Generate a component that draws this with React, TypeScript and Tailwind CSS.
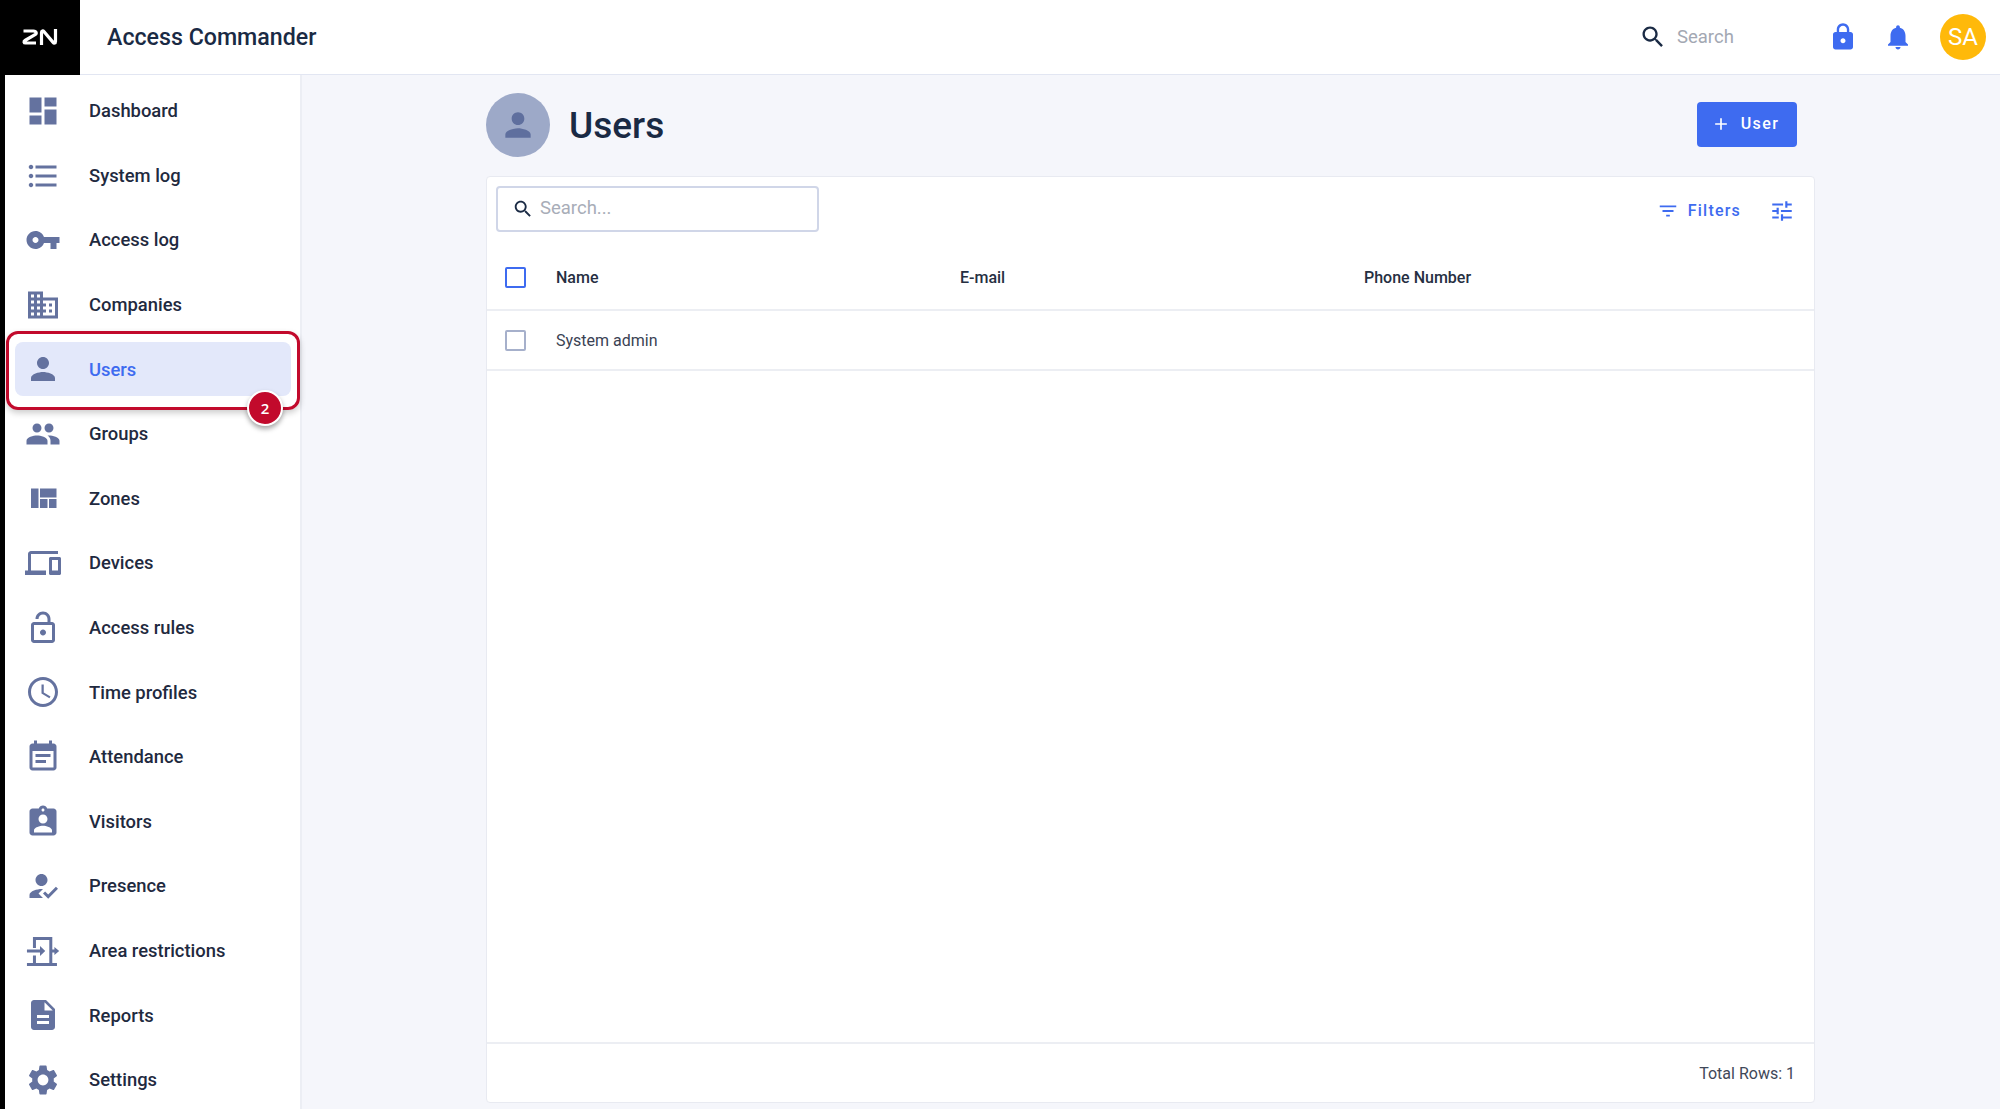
const paths = {
  dashboard: "M3 13h8V3H3v10zm0 8h8v-6H3v6zm10 0h8V11h-8v10zm0-18v6h8V3h-8z",
  list: "M4 10.5c-.83 0-1.5.67-1.5 1.5s.67 1.5 1.5 1.5 1.5-.67 1.5-1.5-.67-1.5-1.5-1.5zm0-6c-.83 0-1.5.67-1.5 1.5S3.17 7.5 4 7.5 5.5 6.83 5.5 6 4.83 4.5 4 4.5zm0 12c-.83 0-1.5.68-1.5 1.5s.68 1.5 1.5 1.5 1.5-.68 1.5-1.5-.67-1.5-1.5-1.5zM7 19h14v-2H7v2zm0-6h14v-2H7v2zm0-8v2h14V5H7z",
  key: "M12.65 10C11.83 7.67 9.61 6 7 6c-3.31 0-6 2.69-6 6s2.69 6 6 6c2.61 0 4.83-1.67 5.65-4H17v4h4v-4h2v-4H12.65zM7 14c-1.1 0-2-.9-2-2s.9-2 2-2 2 .9 2 2-.9 2-2 2z",
  domain: "M12 7V3H2v18h20V7H12zM6 19H4v-2h2v2zm0-4H4v-2h2v2zm0-4H4V9h2v2zm0-4H4V5h2v2zm4 12H8v-2h2v2zm0-4H8v-2h2v2zm0-4H8V9h2v2zm0-4H8V5h2v2zm10 12h-8v-2h2v-2h-2v-2h2v-2h-2V9h8v10zm-2-8h-2v2h2v-2zm0 4h-2v2h2v-2z",
  person: "M12 12c2.21 0 4-1.79 4-4s-1.79-4-4-4-4 1.79-4 4 1.79 4 4 4zm0 2c-2.67 0-8 1.34-8 4v2h16v-2c0-2.66-5.33-4-8-4z",
  group: "M16 11c1.66 0 2.99-1.34 2.99-3S17.66 5 16 5c-1.66 0-3 1.34-3 3s1.34 3 3 3zm-8 0c1.66 0 2.99-1.34 2.99-3S9.66 5 8 5C6.34 5 5 6.34 5 8s1.34 3 3 3zm0 2c-2.33 0-7 1.17-7 3.5V19h14v-2.5c0-2.33-4.67-3.5-7-3.5zm8 0c-.29 0-.62.02-.97.05 1.16.84 1.97 1.97 1.97 3.45V19h6v-2.5c0-2.33-4.67-3.5-7-3.5z",
  quilt: "M10 18h5v-6h-5v6zm-6 0h5V5H4v13zm12 0h5v-6h-5v6zM10 5v6h11V5H10z",
  devices: "M4 6h18V4H4c-1.1 0-2 .9-2 2v11H0v3h14v-3H4V6zm19 2h-6c-.55 0-1 .45-1 1v10c0 .55.45 1 1 1h6c.55 0 1-.45 1-1V9c0-.55-.45-1-1-1zm-1 9h-4v-7h4v7z",
  lockOpen: "M12 17c1.1 0 2-.9 2-2s-.9-2-2-2-2 .9-2 2 .9 2 2 2zm6-9h-1V6c0-2.76-2.24-5-5-5S7 3.24 7 6h2c0-1.66 1.34-3 3-3s3 1.34 3 3v2H6c-1.1 0-2 .9-2 2v10c0 1.1.9 2 2 2h12c1.1 0 2-.9 2-2V10c0-1.1-.9-2-2-2zm0 12H6V10h12v10z",
  lock: "M18 8h-1V6c0-2.76-2.24-5-5-5S7 3.24 7 6v2H6c-1.1 0-2 .9-2 2v10c0 1.1.9 2 2 2h12c1.1 0 2-.9 2-2V10c0-1.1-.9-2-2-2zm-6 9c-1.1 0-2-.9-2-2s.9-2 2-2 2 .9 2 2-.9 2-2 2zm3.1-9H8.9V6c0-1.71 1.39-3.1 3.1-3.1 1.71 0 3.1 1.39 3.1 3.1v2z",
  clock: "M11.99 2C6.47 2 2 6.48 2 12s4.47 10 9.99 10C17.52 22 22 17.52 22 12S17.52 2 11.99 2zM12 20c-4.42 0-8-3.58-8-8s3.58-8 8-8 8 3.58 8 8-3.58 8-8 8zm.5-13H11v6l5.25 3.15.75-1.23-4.5-2.67z",
  event: "M17 10H7v2h10v-2zm2-7h-1V1h-2v2H8V1H6v2H5c-1.11 0-1.99.9-1.99 2L3 19c0 1.1.89 2 2 2h14c1.1 0 2-.9 2-2V5c0-1.1-.9-2-2-2zm0 16H5V8h14v11zm-5-5H7v2h7v-2z",
  assignment: "M19 3h-4.18C14.4 1.84 13.3 1 12 1c-1.3 0-2.4.84-2.82 2H5c-1.1 0-2 .9-2 2v14c0 1.1.9 2 2 2h14c1.1 0 2-.9 2-2V5c0-1.1-.9-2-2-2zm-7 0c.55 0 1 .45 1 1s-.45 1-1 1-1-.45-1-1 .45-1 1-1zm0 4c1.66 0 3 1.34 3 3s-1.34 3-3 3-3-1.34-3-3 1.34-3 3-3zm6 12H6v-1.4c0-2 4-3.1 6-3.1s6 1.1 6 3.1V19z",
  howToReg: "M9 17l3-2.94c-.39-.04-.68-.06-1-.06-2.67 0-8 1.34-8 4v2h9l-3-3zm2-5c2.21 0 4-1.79 4-4s-1.79-4-4-4-4 1.79-4 4 1.79 4 4 4zm4.47 8.5L12 17l1.4-1.41 2.07 2.08 5.13-5.17 1.4 1.41z",
  description: "M14 2H6c-1.1 0-1.99.9-1.99 2L4 20c0 1.1.89 2 1.99 2H18c1.1 0 2-.9 2-2V8l-6-6zm2 16H8v-2h8v2zm0-4H8v-2h8v2zm-3-5V3.500L18.500 9H13z",
  settings: "M19.14 12.94c.04-.3.06-.61.06-.94 0-.32-.02-.64-.07-.94l2.03-1.58c.18-.14.23-.41.12-.61l-1.92-3.32c-.12-.22-.37-.29-.59-.22l-2.39.96c-.5-.38-1.03-.7-1.62-.94l-.36-2.54c-.04-.24-.24-.41-.48-.41h-3.84c-.24 0-.43.17-.47.41l-.36 2.54c-.59.24-1.13.57-1.62.94l-2.39-.96c-.22-.08-.47 0-.59.22L2.74 8.87c-.12.21-.08.47.12.61l2.03 1.58c-.05.3-.09.63-.09.94s.02.64.07.94l-2.03 1.58c-.18.14-.23.41-.12.61l1.92 3.32c.12.22.37.29.59.22l2.39-.96c.5.38 1.03.7 1.62.94l.36 2.54c.05.24.24.41.48.41h3.84c.24 0 .44-.17.47-.41l.36-2.54c.59-.24 1.13-.56 1.62-.94l2.39.96c.22.08.47 0 .59-.22l1.92-3.32c.12-.22.07-.47-.12-.61l-2.01-1.58zM12 15.6c-1.98 0-3.6-1.62-3.6-3.6s1.62-3.6 3.6-3.6 3.6 1.62 3.6 3.6-1.62 3.6-3.6 3.6z",
  search: "M15.5 14h-.79l-.28-.27C15.41 12.59 16 11.11 16 9.5 16 5.91 13.09 3 9.5 3S3 5.91 3 9.5 5.91 16 9.5 16c1.61 0 3.09-.59 4.23-1.57l.27.28v.79l5 4.99L20.49 19l-4.99-5zm-6 0C7.01 14 5 11.99 5 9.5S7.01 5 9.5 5 14 7.01 14 9.5 11.99 14 9.5 14z",
  bell: "M12 22c1.1 0 2-.9 2-2h-4c0 1.1.89 2 2 2zm6-6v-5c0-3.07-1.64-5.64-4.5-6.32V4c0-.83-.67-1.5-1.5-1.5s-1.5.67-1.5 1.5v.68C7.63 5.36 6 7.92 6 11v5l-2 2v1h16v-1l-2-2z",
  filter: "M10 18h4v-2h-4v2zM3 6v2h18V6H3zm3 7h12v-2H6v2z",
  tune: "M3 17v2h6v-2H3zM3 5v2h10V5H3zm10 16v-2h8v-2h-8v-2h-2v6h2zM7 9v2H3v2h4v2h2V9H7zm14 4v-2H11v2h10zm-6-4h2V7h4V5h-4V3h-2v6z",
  add: "M19 13h-6v6h-2v-6H5v-2h6V5h2v6h6v2z",
  // door with arrows going through, not a stock material icon
  area: "M1.300 20h20v2h-20zM5.300 2.700h12.900V20h-2V4.700H7.300V10h-2zM5.300 15h2v5h-2zM1.300 11H10V8.700l3.500 3.300-3.500 3.300V13H1.300zM18.200 11h1.400V9.300l3.200 2.700-3.200 2.700V13h-1.400z",
};

function Icon({ d, className }: { d: string; className?: string }) {
  return (
    <svg viewBox="0 0 24 24" fill="currentColor" className={className}>
      <path d={d} />
    </svg>
  );
}

const nav = [
  { label: "Dashboard", icon: paths.dashboard },
  { label: "System log", icon: paths.list },
  { label: "Access log", icon: paths.key },
  { label: "Companies", icon: paths.domain },
  { label: "Users", icon: paths.person, active: true },
  { label: "Groups", icon: paths.group },
  { label: "Zones", icon: paths.quilt },
  { label: "Devices", icon: paths.devices },
  { label: "Access rules", icon: paths.lockOpen },
  { label: "Time profiles", icon: paths.clock },
  { label: "Attendance", icon: paths.event },
  { label: "Visitors", icon: paths.assignment },
  { label: "Presence", icon: paths.howToReg },
  { label: "Area restrictions", icon: paths.area },
  { label: "Reports", icon: paths.description },
  { label: "Settings", icon: paths.settings },
];

function Header() {
  return (
    <header className="flex h-[75px] shrink-0 items-center border-b border-[#e2e6f2] bg-white">
      <div className="flex h-[75px] w-[80px] items-center justify-center bg-black">
        <svg viewBox="0 0 36 16" className="h-[16px] w-[36px]" fill="none" stroke="white" strokeWidth="3.2">
          <path d="M1.500 2h10c3 0 3.500 2.500 1.500 3.700L3 11.500c-1.500.9-1.200 2.500.5 2.500h10.500" strokeLinejoin="round" />
          <path d="M19.500 16V3.500c0-1.800 1.500-2 2.400-.9L31.100 13.400c.9 1.100 2.400.9 2.400-.9V0" />
        </svg>
      </div>
      <h1 className="ml-[27px] text-[23.2px] font-medium text-[#1a2a44]">Access Commander</h1>
      <div className="ml-auto flex items-center">
        <Icon d={paths.search} className="h-[28px] w-[28px] text-[#1a2a44]" />
        <span className="ml-[10px] w-[151px] pt-[1px] text-[18.5px] text-[#a3a8b3]">Search</span>
        <Icon d={paths.lock} className="h-[30px] w-[30px] text-[#3e6bf0]" />
        <Icon d={paths.bell} className="ml-[25px] h-[30px] w-[30px] text-[#3e6bf0]" />
        <div className="ml-[27px] mr-[14px] flex h-[46px] w-[46px] items-center justify-center rounded-full bg-[#ffb90a] text-[24px] text-white">
          SA
        </div>
      </div>
    </header>
  );
}

function Sidebar() {
  return (
    <aside className="relative flex w-[302px] shrink-0 flex-col gap-[10.6px] border-r-2 border-l-[5px] border-r-[#eceef4] border-l-black bg-white pt-[9px]">
      {nav.map((n) => (
        <div
          key={n.label}
          className={
            n.active
              ? "ml-[10px] mr-[9px] flex h-[54px] shrink-0 items-center rounded-lg bg-[#e3e8fa] text-[#3e6bf0]"
              : "ml-[10px] mr-[9px] flex h-[54px] shrink-0 items-center text-[#1f2a40]"
          }
        >
          <Icon d={n.icon} className="ml-[10px] h-[36px] w-[36px] text-[#64729f]" />
          <span className="ml-[28px] text-[18.4px] font-medium">{n.label}</span>
        </div>
      ))}
      <div className="absolute top-[256px] left-[1px] h-[79px] w-[294px] rounded-[12px] border-[3px] border-[#c20a2c] shadow-[0_3px_6px_rgba(0,0,0,0.2)]" />
      <div className="absolute top-[315px] left-[242px] flex h-[36px] w-[36px] items-center justify-center rounded-full border-[2px] border-white bg-[#c20a2c] text-[15px] font-semibold text-white shadow-[0_3px_5px_rgba(0,0,0,0.35)] [font-family:'Open_Sans',sans-serif]">
        2
      </div>
    </aside>
  );
}

function Checkbox({ blue }: { blue?: boolean }) {
  return (
    <div
      className={
        blue
          ? "ml-[18px] h-[21px] w-[21px] rounded-[2px] border-[2px] border-[#3e6bf0]"
          : "ml-[18px] h-[21px] w-[21px] rounded-[2px] border-[2px] border-[#a6b0cb]"
      }
    />
  );
}

function UsersCard() {
  return (
    <div className="mb-[6px] flex min-h-0 flex-1 flex-col rounded border border-[#e8eaf1] bg-white">
      <div className="flex h-[69px] shrink-0 items-start">
        <div className="ml-[9px] mt-[9px] flex h-[46px] w-[323px] items-center rounded border-2 border-[#d0d6e8]">
          <Icon d={paths.search} className="ml-[14px] h-[22px] w-[22px] text-[#1a2a44]" />
          <span className="ml-[6px] text-[18.5px] text-[#a8adb8]">Search...</span>
        </div>
        <div className="ml-auto mr-[19px] mt-[21px] flex items-center text-[#3e6bf0]">
          <Icon d={paths.filter} className="h-[22px] w-[22px]" />
          <span className="ml-[9px] text-[16px] font-medium tracking-[1.2px]">Filters</span>
          <Icon d={paths.tune} className="ml-[28px] h-[26px] w-[26px]" />
        </div>
      </div>
      <div className="flex h-[65px] shrink-0 items-center border-b-2 border-[#eceef3] text-[16px] font-medium text-[#262f42]">
        <Checkbox blue />
        <span className="ml-[30px] w-[404px]">Name</span>
        <span className="w-[404px]">E-mail</span>
        <span>Phone Number</span>
      </div>
      <div className="flex h-[60px] shrink-0 items-center border-b-2 border-[#eceef3] text-[16px] text-[#3a4253]">
        <Checkbox />
        <span className="ml-[30px] mt-[1px]">System admin</span>
      </div>
      <div className="flex-1" />
      <div className="flex h-[60px] shrink-0 items-center justify-end border-t-2 border-[#eceef3] pt-[2px] pr-[19px] text-[16px] text-[#3f4859]">
        Total Rows: 1
      </div>
    </div>
  );
}

export default function App() {
  return (
    <div className="flex h-[1109px] flex-col overflow-hidden bg-[#f5f6fb] font-['Roboto',sans-serif]">
      <Header />
      <div className="flex min-h-0 flex-1">
        <Sidebar />
        <main className="ml-[184px] flex w-[1329px] flex-col pt-[18px]">
          <div className="mb-[19px] flex h-[64px] shrink-0 items-center">
            <div className="flex h-[64px] w-[64px] items-center justify-center rounded-full bg-[#9da9c8]">
              <Icon d={paths.person} className="h-[38px] w-[38px] text-[#5f6f9e]" />
            </div>
            <h2 className="ml-[19px] pt-[1px] text-[37px] font-medium text-[#1a2a44]">Users</h2>
            <button className="mb-[2px] ml-auto mr-[18px] flex h-[45px] w-[100px] items-center justify-center rounded bg-[#3e6bf0] text-[16px] font-medium tracking-[1.4px] text-white">
              <Icon d={paths.add} className="-ml-[4px] h-[20px] w-[20px]" />
              <span className="ml-[10px]">User</span>
            </button>
          </div>
          <UsersCard />
        </main>
      </div>
    </div>
  );
}
